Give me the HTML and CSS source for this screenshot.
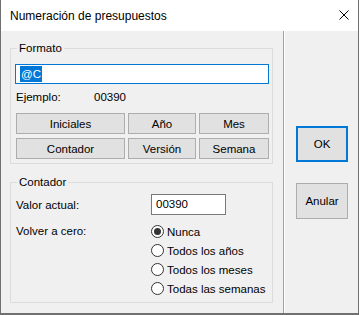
FILE: index.html
```html
<!DOCTYPE html>
<html lang="es">

<head>
    <meta charset="UTF-8">
    <meta name="viewport" content="width=device-width, initial-scale=1.0">
    <title>Numeración de presupuestos</title>
    <link rel="stylesheet" href="styles.css">
</head>

<body>
    <div class="window">
        <div class="titlebar">
            <span class="title">Numeración de presupuestos</span>
            <svg class="close" width="10" height="10" viewBox="0 0 10 10">
                <path d="M0.5 0.5 L9.5 9.5 M9.5 0.5 L0.5 9.5" stroke="#000" stroke-width="1" fill="none" />
            </svg>
        </div>

        <div class="dialog-body">
            <div class="main-panel">
                <fieldset class="group">
                    <legend>Formato</legend>
                    <div class="group-body format-body">
                        <div class="text-input active"><span class="selected">@C</span></div>

                        <div class="example-row">
                            <span class="example-label">Ejemplo:</span>
                            <span>00390</span>
                        </div>

                        <div class="token-buttons">
                            <div class="btn">Iniciales</div>
                            <div class="btn">Año</div>
                            <div class="btn">Mes</div>
                            <div class="btn">Contador</div>
                            <div class="btn">Versión</div>
                            <div class="btn">Semana</div>
                        </div>
                    </div>
                </fieldset>

                <fieldset class="group counter-group">
                    <legend>Contador</legend>
                    <div class="group-body counter-body">
                        <div class="field-row">
                            <span class="field-label">Valor actual:</span>
                            <div class="text-input value-input">00390</div>
                        </div>

                        <div class="reset-row">
                            <span class="field-label reset-label">Volver a cero:</span>
                            <div class="radio-list">
                                <div class="radio-item"><span class="radio checked"></span>Nunca</div>
                                <div class="radio-item"><span class="radio"></span>Todos los años</div>
                                <div class="radio-item"><span class="radio"></span>Todos los meses</div>
                                <div class="radio-item"><span class="radio"></span>Todas las semanas</div>
                            </div>
                        </div>
                    </div>
                </fieldset>
            </div>

            <div class="separator"></div>

            <div class="side-panel">
                <div class="btn dialog-btn default">OK</div>
                <div class="btn dialog-btn">Anular</div>
            </div>
        </div>
    </div>
</body>

</html>
```

FILE: styles.css
```css
:root {
    --face: #f0f0f0;
    --button-face: #e1e1e1;
    --button-border: #adadad;
    --group-border: #dcdcdc;
    --accent: #0078d7;
    --frame: #707070;
}

* {
    box-sizing: border-box;
    margin: 0;
    padding: 0;
}

body {
    font-family: 'Liberation Sans', Arial, sans-serif;
    font-size: 11.5px;
    line-height: 16px;
    color: #000;
    background-color: #ffffff;
}

.window {
    width: 359px;
    height: 315px;
    border: 1px solid var(--frame);
    border-top: none;
    border-bottom-width: 2px;
    display: flex;
    flex-direction: column;
    background-color: var(--face);
}

.titlebar {
    height: 31px;
    background-color: #ffffff;
    display: flex;
    align-items: center;
    justify-content: space-between;
    padding: 0 9px 0 9px;
}

.title {
    font-size: 12px;
}

.close {
    display: block;
    margin-top: -1px;
}

.dialog-body {
    flex: 1;
    display: flex;
}

.main-panel {
    width: 282px;
    padding: 9px 10px 0 9px;
}

.separator {
    width: 2px;
    border-left: 1px solid #a0a0a0;
    border-right: 1px solid #ffffff;
}

.side-panel {
    flex: 1;
    padding: 95px 0 0 11px;
}

/* group boxes */
.group {
    border: 1px solid var(--group-border);
    padding: 0;
    width: 263px;
}

.group legend {
    margin-left: 6px;
    padding: 0 2px;
    line-height: 16px;
}

.counter-group {
    margin-top: 10px;
}

.format-body {
    padding: 8px 3px 4px 4px;
}

.text-input {
    height: 20px;
    background-color: #ffffff;
    border: 1px solid #7a7a7a;
    padding: 1px 4px;
    line-height: 16px;
}

.text-input.active {
    border-color: var(--accent);
}

.selected {
    background-color: var(--accent);
    color: #ffffff;
    display: inline-block;
    padding: 0 1px;
}

.example-row {
    display: flex;
    margin-top: 5px;
    padding-left: 1px;
}

.example-label {
    width: 78px;
}

.token-buttons {
    display: grid;
    grid-template-columns: 109px 68px 70px;
    grid-auto-rows: 21px;
    column-gap: 3px;
    row-gap: 4px;
    margin: 8px 0 0 1px;
}

.btn {
    background-color: var(--button-face);
    border: 1px solid var(--button-border);
    display: flex;
    align-items: center;
    justify-content: center;
}

/* counter group */
.counter-body {
    padding: 4px 0 4px 5px;
}

.field-row {
    display: flex;
    align-items: center;
}

.field-label {
    width: 135px;
}

.value-input {
    width: 75px;
    height: 21px;
    padding: 1px 4px;
}

.reset-row {
    display: flex;
    margin-top: 7px;
}

.reset-label {
    line-height: 19px;
}

.radio-list {
    display: flex;
    flex-direction: column;
}

.radio-item {
    height: 19px;
    display: flex;
    align-items: center;
    white-space: nowrap;
}

.radio {
    width: 13px;
    height: 13px;
    border: 1px solid #333333;
    border-radius: 50%;
    background-color: #ffffff;
    margin-right: 3px;
    display: flex;
    align-items: center;
    justify-content: center;
    flex-shrink: 0;
}

.radio.checked::after {
    content: '';
    width: 7px;
    height: 7px;
    border-radius: 50%;
    background-color: #333333;
}

/* dialog buttons */
.dialog-btn {
    width: 52px;
    height: 36px;
    margin-bottom: 21px;
}

.dialog-btn.default {
    border: 2px solid var(--accent);
}
```
